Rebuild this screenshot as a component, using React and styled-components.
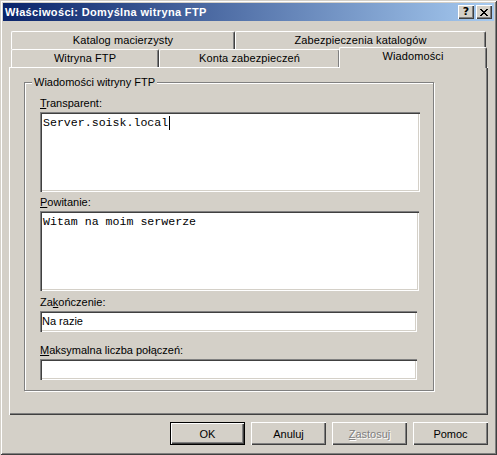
import React from "react";
import styled, { createGlobalStyle } from "styled-components";

const GlobalStyle = createGlobalStyle`
  html, body {
    margin: 0;
    padding: 0;
    background: #d4d0c8;
  }
  * {
    box-sizing: border-box;
  }
`;

const CLOSE_PIXELS = [
  "XX....XX",
  ".XX..XX.",
  "..XXXX..",
  "...XX...",
  "..XXXX..",
  ".XX..XX.",
  "XX....XX",
];

function CloseGlyph() {
  return (
    <svg width="8" height="7" viewBox="0 0 8 7" shapeRendering="crispEdges">
      {CLOSE_PIXELS.map((row, y) =>
        row.split("").map((c, x) =>
          c === "X" ? <rect key={`${x}-${y}`} x={x} y={y} width="1" height="1" fill="#000" /> : null
        )
      )}
    </svg>
  );
}

function App() {
  return (
    <>
      <GlobalStyle />
      <Window>
        <TitleBar>
          <Title>Właściwości: Domyślna witryna FTP</Title>
          <CaptionButtons>
            <CaptionButton>
              <HelpMark>?</HelpMark>
            </CaptionButton>
            <CaptionButton>
              <CloseGlyph />
            </CaptionButton>
          </CaptionButtons>
        </TitleBar>

        <Body>
          <TabRows>
            <TabRow>
              <Tab $width={224}>Katalog macierzysty</Tab>
              <Tab $width={251}>Zabezpieczenia katalogów</Tab>
            </TabRow>
            <TabRow>
              <Tab $width={148}>Witryna FTP</Tab>
              <Tab $width={181}>Konta zabezpieczeń</Tab>
              <Tab $width={148} $active>
                Wiadomości
              </Tab>
            </TabRow>
          </TabRows>

          <Panel>
            <GroupBox>
              <Legend>Wiadomości witryny FTP</Legend>

              <Label>
                <Key>T</Key>ransparent:
              </Label>
              <EditBox $height={80} $width={380} $mono>
                Server.soisk.local
                <Caret />
              </EditBox>

              <Label $top={4}>
                <Key>P</Key>owitanie:
              </Label>
              <EditBox $height={80} $width={379} $mono>
                Witam na moim serwerze
              </EditBox>

              <Label $top={5}>
                Za<Key>k</Key>ończenie:
              </Label>
              <EditBox $height={21} $width={377}>
                Na razie
              </EditBox>

              <Label $top={12}>
                <Key>M</Key>aksymalna liczba połączeń:
              </Label>
              <EditBox $height={21} $width={377} />
            </GroupBox>
          </Panel>

          <ButtonRow>
            <Button $default>OK</Button>
            <Button>Anuluj</Button>
            <Button $disabled>
              <Key>Z</Key>astosuj
            </Button>
            <Button>Pomoc</Button>
          </ButtonRow>
        </Body>
      </Window>
    </>
  );
}

const Window = styled.div`
  width: 497px;
  height: 455px;
  padding: 3px;
  display: flex;
  flex-direction: column;
  background: #d4d0c8;
  box-shadow: inset 1px 1px #d4d0c8, inset -1px -1px #404040,
    inset 2px 2px #ffffff, inset -2px -2px #808080;
  font-family: "Liberation Sans", Arial, sans-serif;
  font-size: 11px;
  font-weight: normal;
  color: #000;
`;

const TitleBar = styled.div`
  height: 18px;
  display: flex;
  align-items: center;
  justify-content: space-between;
  padding: 0 2px;
  background: linear-gradient(to right, #0a246a, #a6caf0);
`;

const Title = styled.div`
  color: #fff;
  font-weight: bold;
  font-size: 11px;
  letter-spacing: 0.35px;
`;

const CaptionButtons = styled.div`
  display: flex;
  gap: 2px;
`;

const CaptionButton = styled.div`
  width: 16px;
  height: 14px;
  display: flex;
  align-items: center;
  justify-content: center;
  background: #d4d0c8;
  box-shadow: inset 1px 1px #ffffff, inset -1px -1px #404040,
    inset -2px -2px #808080;
`;

const HelpMark = styled.span`
  font-family: "DejaVu Sans", sans-serif;
  font-weight: bold;
  font-size: 11px;
  line-height: 11px;
  margin-top: -1px;
`;

const Body = styled.div`
  flex: 1;
  display: flex;
  flex-direction: column;
  padding: 10px 6px 0;
`;

const TabRows = styled.div`
  display: flex;
  flex-direction: column;
  padding-left: 2px;
`;

const TabRow = styled.div`
  display: flex;
  height: 18px;
  align-items: flex-end;
`;

const Tab = styled.div`
  position: relative;
  width: ${(p) => p.$width}px;
  height: ${(p) => (p.$active ? 21 : 18)}px;
  margin-left: ${(p) => (p.$active ? -1 : 0)}px;
  margin-bottom: ${(p) => (p.$active ? -1 : 0)}px;
  z-index: ${(p) => (p.$active ? 2 : 0)};
  display: flex;
  justify-content: center;
  padding-top: 2px;
  background: #d4d0c8;
  border-left: 1px solid #ffffff;
  border-top: 1px solid #ffffff;
  border-right: 1px solid #404040;
  border-top-left-radius: 2px;
  border-top-right-radius: 2px;
  box-shadow: inset -1px 0 #808080;
  letter-spacing: 0.1px;
  white-space: nowrap;
`;

const Panel = styled.div`
  height: 348px;
  display: flex;
  padding: 15px 54px 24px 15px;
  background: #d4d0c8;
  box-shadow: inset 1px 1px #ffffff, inset -1px -1px #404040,
    inset -2px -2px #808080;
`;

const GroupBox = styled.div`
  position: relative;
  flex: 1;
  display: flex;
  flex-direction: column;
  align-items: flex-start;
  padding: 14px 0 0 15px;
  border: 1px solid #808080;
  box-shadow: inset 1px 1px #ffffff, 1px 1px #ffffff;
`;

const Legend = styled.span`
  position: absolute;
  top: -7px;
  left: 7px;
  padding: 0 2px;
  line-height: 13px;
  background: #d4d0c8;
`;

const Label = styled.div`
  line-height: 13px;
  margin-top: ${(p) => p.$top || 0}px;
  margin-bottom: 2px;
`;

const Key = styled.span`
  text-decoration: underline;
`;

const EditBox = styled.div`
  width: ${(p) => p.$width}px;
  height: ${(p) => p.$height}px;
  padding: ${(p) => (p.$mono ? "4px 3px" : "3px 2px")};
  background: #fff;
  box-shadow: inset 1px 1px #808080, inset 2px 2px #404040,
    inset -1px -1px #ffffff, inset -2px -2px #d4d0c8;
  font-family: ${(p) =>
    p.$mono ? '"Liberation Mono", "Courier New", monospace' : "inherit"};
  font-size: ${(p) => (p.$mono ? "11.6px" : "11px")};
  line-height: 14px;
  white-space: pre;
`;

const Caret = styled.span`
  display: inline-block;
  width: 1px;
  height: 14px;
  margin-left: 1px;
  vertical-align: top;
  background: #000;
`;

const ButtonRow = styled.div`
  display: flex;
  justify-content: flex-end;
  gap: 6px;
  margin-top: 7px;
`;

const Button = styled.div`
  width: 75px;
  height: 23px;
  display: flex;
  align-items: center;
  justify-content: center;
  font-weight: normal;
  background: #d4d0c8;
  color: ${(p) => (p.$disabled ? "#808080" : "#000")};
  text-shadow: ${(p) => (p.$disabled ? "1px 1px #ffffff" : "none")};
  box-shadow: ${(p) =>
    p.$default
      ? "inset 0 0 0 1px #000, inset 2px 2px #ffffff, inset -2px -2px #404040, inset -3px -3px #808080"
      : "inset 1px 1px #ffffff, inset -1px -1px #404040, inset -2px -2px #808080"};
`;

export default App;
